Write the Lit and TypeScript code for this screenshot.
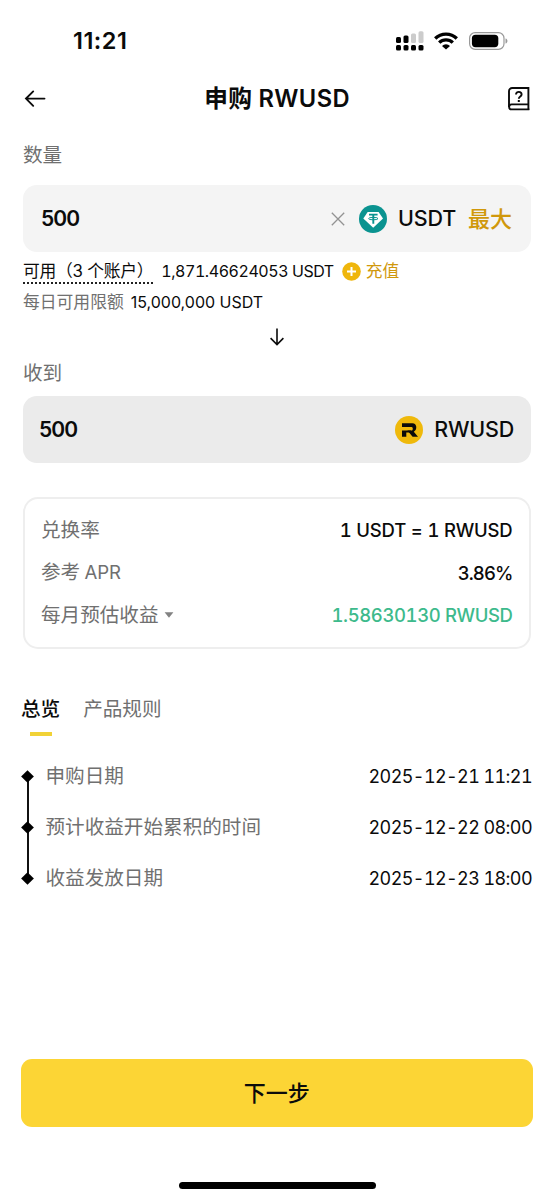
import { LitElement, html, css, svg } from "lit";
import { customElement } from "lit/decorators.js";

const signalIcon = svg`<svg class="signal" width="28" height="20" viewBox="0 0 28 20">
  <g fill="#000">
    <rect x="0" y="14" width="5" height="5.4" rx="1.5"/><rect x="7.5" y="14" width="5" height="5.4" rx="1.5"/>
    <rect x="15" y="14" width="5" height="5.4" rx="1.5"/><rect x="22.5" y="14" width="5" height="5.4" rx="1.5"/>
    <rect x="0" y="6" width="5" height="6" rx="1.5"/><rect x="7.5" y="4.5" width="5" height="7.5" rx="1.5"/>
  </g>
  <g fill="#ccc"><rect x="15" y="2.6" width="5" height="9.4" rx="1.5"/><rect x="22.5" y="0.2" width="5" height="11.8" rx="1.5"/></g>
</svg>`;

const wifiIcon = svg`<svg class="wifi" width="24" height="18" viewBox="0 0 24 18">
  <g fill="none" stroke="#000" stroke-width="3.3">
    <path d="M1.2 6.5A15.3 15.3 0 0 1 22.8 6.5"/>
    <path d="M5.2 10.7A9.6 9.6 0 0 1 18.8 10.7"/>
  </g>
  <path d="M12 17.6L8 13.9A5.6 5.6 0 0 1 16 13.9Z" fill="#000"/>
</svg>`;

const batteryIcon = svg`<svg width="39" height="18" viewBox="0 0 39 18">
  <rect x=".6" y=".6" width="34.4" height="16.8" rx="5.6" fill="none" stroke="#999" stroke-width="1.2"/>
  <rect x="2.9" y="2.8" width="26.4" height="12.4" rx="3.6" fill="#000"/>
  <path d="M36.5 6.4c2.6.6 2.6 4.6 0 5.2z" fill="#999"/>
</svg>`;

const backIcon = svg`<svg width="22" height="18" viewBox="0 0 22 18" fill="none" stroke="#0b0b0b" stroke-width="1.9" stroke-linecap="round">
  <path d="M20.5 8.6H2M9.2 1.4L2 8.6l7.2 7.2"/>
</svg>`;

const guideIcon = svg`<svg width="22" height="24" viewBox="0 0 22 24" fill="none" stroke="#0b0b0b" stroke-width="1.9">
  <path d="M20.4 23V1H4.2A3.2 3.2 0 0 0 1 4.2V20"/>
  <path d="M21.3 22.4H3.6a2.5 2.5 0 0 1 0-5H20.4"/>
  <path d="M8 7.6c0-3.7 5.6-3.4 5.6-.2 0 2.1-2.8 2-2.8 4.3"/>
  <rect x="9.8" y="13" width="2" height="2" fill="#0b0b0b" stroke="none"/>
</svg>`;

const clearIcon = svg`<svg width="14" height="14" viewBox="0 0 14 14" fill="none" stroke="#929292" stroke-width="1.3">
  <path d="M.8.8l12.4 12.4M13.2.8L.8 13.2"/>
</svg>`;

const usdtIcon = svg`<svg width="28" height="28" viewBox="0 0 28 28">
  <circle cx="14" cy="14" r="14" fill="#0a9390"/>
  <path d="M8.7 6.9H19.6L24 13.4 14.2 22.7 4.3 13.4Z" fill="#fff"/>
  <path d="M10 9.6h8.6M14.3 9.6v9.2" fill="none" stroke="#0a9390" stroke-width="1.9"/>
  <ellipse cx="14.3" cy="13.6" rx="4.7" ry="1.2" fill="none" stroke="#0a9390" stroke-width="1"/>
</svg>`;

const rwusdIcon = svg`<svg width="28" height="28" viewBox="0 0 28 28">
  <circle cx="14" cy="14" r="14" fill="#efb90b"/>
  <path d="M7 7.3H17.4C22.2 7.3 22.5 14 18.8 15.8L23 20.8H17.6L12.4 14.6H16.6C18.2 14.6 18.2 11 16.6 11H7Z" fill="#0b0b0b"/>
  <path d="M7 14.6H16V16.4H11.3V20.8H7Z" fill="#0b0b0b"/>
</svg>`;

const plusIcon = svg`<svg width="19" height="19" viewBox="0 0 19 19">
  <circle cx="9.5" cy="9.5" r="9.3" fill="#efb60c"/>
  <path d="M9.5 5v9M5 9.5h9" stroke="#fff" stroke-width="2"/>
</svg>`;

const downIcon = svg`<svg width="16" height="18" viewBox="0 0 16 18" fill="none" stroke="#0b0b0b" stroke-width="1.6">
  <path d="M8 .5V16M1.6 10.1L8 16.5l6.4-6.4"/>
</svg>`;

const caretIcon = svg`<svg width="10" height="6" viewBox="0 0 10 6"><path d="M.6.3h8.8L5 5.7z" fill="#828282"/></svg>`;

const schedule = [
  { label: "申购日期", time: "2025-12-21 11:21" },
  { label: "预计收益开始累积的时间", time: "2025-12-22 08:00" },
  { label: "收益发放日期", time: "2025-12-23 18:00" },
];

@customElement("app-root")
export class AppRoot extends LitElement {
  static styles = css`
    :host {
      display: flex;
      flex-direction: column;
      box-sizing: border-box;
      width: 554px;
      height: 1200px;
      overflow: hidden;
      background: #fff;
      color: #0b0b0b;
      font-family: Inter, "Noto Sans CJK SC", sans-serif;
      font-size: 19.6px;
      line-height: 1;
      white-space: nowrap;
    }
    svg { display: block; flex: none; }
    .row { display: flex; align-items: center; }
    .spread { justify-content: space-between; }
    .grow { flex: 1; }
    .status { height: 82px; padding: 0 46px 0 73px; box-sizing: border-box; }
    .clock { font-size: 23.5px; font-weight: 600; letter-spacing: 0.5px; }
    .signal { margin-right: 10px; }
    .wifi { margin-right: 11px; }
    .header { height: 33px; padding: 0 24px; }
    .title { font-size: 23.7px; font-weight: 600; letter-spacing: 0.35px; }
    .label { height: 24px; padding-left: 23px; color: #707070; }
    .amount { margin-top: 29px; }
    .received { margin-top: 16px; }
    .field {
      height: 67px;
      box-sizing: border-box;
      margin: 17px 23px 0;
      padding: 0 18px;
      border-radius: 14px;
      background: #f4f4f4;
      font-size: 21.5px;
      font-weight: 500;
    }
    .locked { background: #ebebeb; margin-top: 10px; padding: 0 17px 0 16px; }
    .digits { font-size: 21px; font-weight: 600; letter-spacing: -0.9px; }
    .token { margin-left: 11px; letter-spacing: -0.2px; }
    .coin { margin-left: 14px; }
    .max { margin-left: 12px; margin-right: 1px; color: #d0980b; font-size: 22px; }
    .note { padding-left: 23px; font-size: 16.8px; }
    .balance { height: 32px; margin-top: 3px; }
    .accounts { border-bottom: 2px dotted #222; line-height: 22px; margin-top: 2px; letter-spacing: -0.25px; }
    .figure { font-size: 16px; margin-left: 7px; }
    .available { font-feature-settings: "tnum"; letter-spacing: -0.45px; margin-left: 8px; }
    .plus { margin: 0 5px 0 8px; }
    .deposit { color: #d0980b; }
    .quota { height: 30px; }
    .muted { color: #707070; }
    .direction { display: flex; justify-content: center; margin-top: 11px; }
    .card {
      display: flex;
      flex-direction: column;
      justify-content: center;
      gap: 18.4px;
      box-sizing: border-box;
      height: 152px;
      margin: 34px 23px 0;
      padding: 0 16.5px 0 16px;
      border: 2px solid #eee;
      border-radius: 15px;
    }
    .entry { height: 24px; }
    .apr { letter-spacing: -0.2px; word-spacing: -0.5px; }
    .latin { font-size: 18.6px; }
    .value { font-size: 18.5px; font-weight: 500; font-feature-settings: "tnum"; }
    .rate { letter-spacing: -0.2px; }
    .percent { letter-spacing: -0.9px; }
    .gain { color: #3dba8c; letter-spacing: -0.4px; }
    .caret { margin-left: 5px; }
    .tabs { margin-top: 46.5px; padding-left: 21px; gap: 23px; align-items: flex-start; }
    .tab { display: flex; flex-direction: column; align-items: center; gap: 10.5px; color: #707070; line-height: 26px; }
    .active { color: #0b0b0b; font-weight: 500; }
    .bar { width: 22px; height: 4px; background: #f1d236; }
    .timeline { margin: 15px 22px 0 21.5px; }
    .step { height: 51px; }
    .rail { display: flex; flex-direction: column; align-items: center; width: 12px; height: 51px; margin-right: 12px; }
    .line { flex: 1; width: 2px; background: #111; }
    .hidden { background: none; }
    .dot { width: 9px; height: 9px; margin: 0 1.5px; background: #000; transform: rotate(45deg); }
    .time { font-size: 18px; font-feature-settings: "tnum"; letter-spacing: -0.6px; }
    .next {
      display: flex;
      align-items: center;
      justify-content: center;
      height: 68px;
      margin: auto 21.5px 0 21px;
      border-radius: 11px;
      background: #fcd535;
      font-size: 22px;
      font-weight: 500;
    }
    .home { width: 197px; height: 7px; margin: 55px auto 11px; border-radius: 4px; background: #000; }
  `;

  render() {
    return html`
      <div class="row status">
        <span class="clock">11:21</span><span class="grow"></span>
        ${signalIcon}${wifiIcon}${batteryIcon}
      </div>
      <div class="row spread header">${backIcon}<span class="title">申购 RWUSD</span>${guideIcon}</div>

      <div class="row label amount">数量</div>
      <div class="row field">
        <span class="digits">500</span><span class="grow"></span>${clearIcon}
        <span class="coin">${usdtIcon}</span><span class="token">USDT</span><span class="max">最大</span>
      </div>
      <div class="row note balance">
        <span class="accounts">可用（3 个账户）</span>
        <span class="figure available">1,871.46624053 USDT</span>
        <span class="plus">${plusIcon}</span><span class="deposit">充值</span>
      </div>
      <div class="row note quota"><span class="muted">每日可用限额</span><span class="figure">15,000,000 USDT</span></div>
      <div class="direction">${downIcon}</div>

      <div class="row label received">收到</div>
      <div class="row field locked">
        <span class="digits">500</span><span class="grow"></span>${rwusdIcon}<span class="token">RWUSD</span>
      </div>

      <div class="card">
        <div class="row spread entry"><span class="muted">兑换率</span><span class="value rate">1 USDT = 1 RWUSD</span></div>
        <div class="row spread entry"><span class="muted apr">参考 <span class="latin">APR</span></span><span class="value percent">3.86%</span></div>
        <div class="row entry">
          <span class="muted">每月预估收益</span><span class="caret">${caretIcon}</span><span class="grow"></span>
          <span class="value gain">1.58630130 RWUSD</span>
        </div>
      </div>

      <div class="row tabs">
        <div class="tab active">总览<span class="bar"></span></div>
        <div class="tab">产品规则</div>
      </div>

      <div class="timeline">
        ${schedule.map(
          (s, i) => html`<div class="row step">
            <div class="rail">
              <span class="line ${i === 0 ? "hidden" : ""}"></span>
              <span class="dot"></span>
              <span class="line ${i === schedule.length - 1 ? "hidden" : ""}"></span>
            </div>
            <span class="muted">${s.label}</span><span class="grow"></span><span class="time">${s.time}</span>
          </div>`
        )}
      </div>

      <div class="next">下一步</div>
      <div class="home"></div>
    `;
  }
}
